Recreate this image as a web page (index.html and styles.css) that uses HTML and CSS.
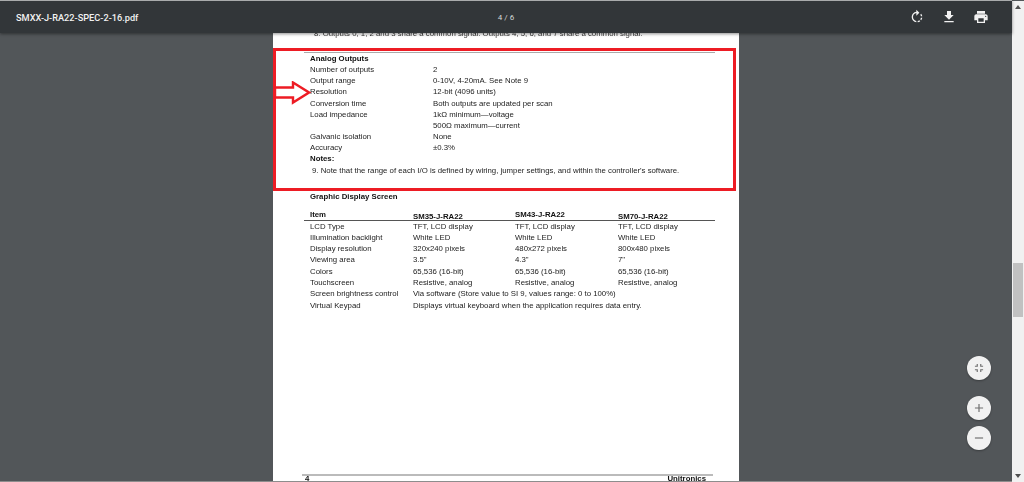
FILE: index.html
```html
<!DOCTYPE html>
<html lang="en">
<head>
  <meta charset="UTF-8" />
  <title>SMXX-J-RA22-SPEC-2-16.pdf</title>
  <link rel="stylesheet" href="styles.css">
</head>
<body>
  <header class="toolbar">
    <div class="file-name">SMXX-J-RA22-SPEC-2-16.pdf</div>
    <div class="page-count">4 / 6</div>
    <div class="tools">
      <svg class="tool" viewBox="0 0 24 24"><path d="M15.55 5.55L11 1v3.07C7.06 4.56 4 7.92 4 12s3.05 7.44 7 7.93v-2.02c-2.84-.48-5-2.94-5-5.91s2.16-5.43 5-5.91V10l4.55-4.45zM19.93 11c-.17-1.39-.72-2.73-1.62-3.89l-1.42 1.42c.54.75.88 1.6 1.02 2.47h2.02zM13 17.9v2.02c1.39-.17 2.74-.71 3.9-1.61l-1.44-1.44c-.75.54-1.59.89-2.46 1.03zm3.89-2.42l1.42 1.41c.9-1.16 1.45-2.5 1.62-3.89h-2.02c-.14.87-.48 1.72-1.02 2.48z"/></svg>
      <svg class="tool" viewBox="0 0 24 24"><path d="M19 9h-4V3H9v6H5l7 7 7-7zM5 18v2h14v-2H5z"/></svg>
      <svg class="tool" viewBox="0 0 24 24"><path d="M19 8H5c-1.66 0-3 1.34-3 3v6h4v4h12v-4h4v-6c0-1.66-1.34-3-3-3zm-3 11H8v-5h8v5zm3-7c-.55 0-1-.45-1-1s.45-1 1-1 1 .45 1 1-.45 1-1 1zm-1-9H6v4h12V3z"/></svg>
    </div>
  </header>

  <div class="content">
    <main class="viewer">
      <article class="page">
        <p class="note-top">8. Outputs 0, 1, 2 and 3 share a common signal. Outputs 4, 5, 6, and 7 share a common signal.</p>

        <section class="callout">
          <svg class="arrow" viewBox="0 0 36 24">
            <polygon points="0,6.5 18,6.5 18,1.5 34,11.5 18,21.5 18,16.5 0,16.5"/>
          </svg>
          <div class="spec">
            <div class="spec-title">Analog Outputs</div>
            <div class="spec-row"><span>Number of outputs</span><span>2</span></div>
            <div class="spec-row"><span>Output range</span><span>0-10V, 4-20mA. See Note 9</span></div>
            <div class="spec-row"><span>Resolution</span><span>12-bit (4096 units)</span></div>
            <div class="spec-row"><span>Conversion time</span><span>Both outputs are updated per scan</span></div>
            <div class="spec-row"><span>Load impedance</span><span>1kΩ minimum—voltage</span></div>
            <div class="spec-row"><span></span><span>500Ω maximum—current</span></div>
            <div class="spec-row"><span>Galvanic isolation</span><span>None</span></div>
            <div class="spec-row"><span>Accuracy</span><span>±0.3%</span></div>
            <div class="spec-title">Notes:</div>
            <div class="spec-note">9. Note that the range of each I/O is defined by wiring, jumper settings, and within the controller's software.</div>
          </div>
        </section>

        <h2 class="display-title">Graphic Display Screen</h2>

        <div class="display-table">
          <div class="head-row">
            <b class="head-item">Item</b>
            <b class="head-model">SM35-J-RA22</b>
            <b class="head-model head-mid">SM43-J-RA22</b>
            <b class="head-model">SM70-J-RA22</b>
          </div>
          <div class="row"><span>LCD Type</span><span>TFT, LCD display</span><span>TFT, LCD display</span><span>TFT, LCD display</span></div>
          <div class="row"><span>Illumination backlight</span><span>White LED</span><span>White LED</span><span>White LED</span></div>
          <div class="row"><span>Display resolution</span><span>320x240 pixels</span><span>480x272 pixels</span><span>800x480 pixels</span></div>
          <div class="row"><span>Viewing area</span><span>3.5"</span><span>4.3"</span><span>7"</span></div>
          <div class="row"><span>Colors</span><span>65,536 (16-bit)</span><span>65,536 (16-bit)</span><span>65,536 (16-bit)</span></div>
          <div class="row"><span>Touchscreen</span><span>Resistive, analog</span><span>Resistive, analog</span><span>Resistive, analog</span></div>
          <div class="row"><span>Screen brightness control</span><span class="span-all">Via software (Store value to SI 9, values range: 0 to 100%)</span></div>
          <div class="row row-last"><span>Virtual Keypad</span><span class="span-all">Displays virtual keyboard when the application requires data entry.</span></div>
        </div>

        <footer class="page-foot">
          <b>4</b>
          <b>Unitronics</b>
        </footer>
      </article>

      <div class="zoom-controls">
        <button class="fab fab-fit"><svg viewBox="0 0 24 24"><path d="M5 16h3v3h2v-5H5v2zm3-8H5v2h5V5H8v3zm6 11h2v-3h3v-2h-5v5zm2-11V5h-2v5h5V8h-3z"/></svg></button>
        <button class="fab"><svg viewBox="0 0 24 24"><path d="M19 13h-6v6h-2v-6H5v-2h6V5h2v6h6v2z"/></svg></button>
        <button class="fab"><svg viewBox="0 0 24 24"><path d="M19 13H5v-2h14v2z"/></svg></button>
      </div>
    </main>
  </div>

  <div class="scrollbar">
    <div class="scroll-up"></div>
    <div class="scroll-thumb"></div>
    <div class="scroll-down"></div>
  </div>
</body>
</html>
```

FILE: styles.css
```css
html, body {
  height: 100%;
}
body {
  margin: 0;
  height: 482px;
  overflow: hidden;
  position: relative;
  font-family: "Liberation Sans", Arial, sans-serif;
  background: #525659;
}
.toolbar {
  position: relative;
  z-index: 2;
  height: 32px;
  margin-right: 12px;
  border-top: 1px solid #a9abac;
  background: #323639;
  box-shadow: 0 1px 3px rgba(0,0,0,0.45);
  display: grid;
  grid-template-columns: 1fr auto 1fr;
  align-items: center;
  color: #f1f1f1;
}
.file-name {
  padding-left: 16px;
  font-family: Roboto, sans-serif;
  font-size: 9.2px;
  font-weight: 500;
}
.page-count {
  font-family: Roboto, sans-serif;
  font-size: 8px;
  color: #d5d6d7;
}
.tools {
  display: flex;
  justify-content: flex-end;
  gap: 16px;
  padding-right: 23px;
}
.tool {
  width: 16px;
  height: 16px;
  fill: #f1f1f1;
}
.content {
  height: 449px;
  margin-right: 12px;
  overflow: hidden;
}
.viewer {
  position: relative;
  height: 448px;
  border-bottom: 1px solid #8d8d8d;
  overflow: hidden;
}
.page {
  width: 466px;
  height: 470px;
  margin: 0 auto;
  background: #fff;
  color: #1c1c1c;
  font-size: 7.8px;
  line-height: 11.15px;
  filter: blur(0.3px);
}
.note-top {
  margin: 0;
  padding: 0 0 0 41px;
  position: relative;
  top: -5px;
  height: 15px;
  color: #333;
}
.callout {
  position: relative;
  width: 457px;
  height: 137px;
  border: 3px solid #ed1c24;
  background: #fff;
}
.arrow {
  position: absolute;
  left: -1px;
  top: 30px;
  width: 36px;
  height: 24px;
  fill: #fff;
  stroke: #ed1c24;
  stroke-width: 2.4;
}
.spec {
  margin: 1px 18px 0 28px;
  border-top: 1.5px solid #aaa;
}
.spec-title {
  padding-left: 6px;
  font-weight: bold;
  color: #111;
}
.spec-row {
  display: grid;
  grid-template-columns: 123px 1fr;
  padding-left: 6px;
}
.spec-note {
  padding-left: 8px;
  white-space: nowrap;
}
.display-title {
  margin: 0 0 0 37px;
  font-size: 7.8px;
  line-height: 12px;
  color: #111;
}
.display-table {
  margin: 6px 24px 0 31px;
}
.head-row {
  display: grid;
  grid-template-columns: 103px 102px 103px 1fr;
  height: 11px;
  border-bottom: 1px solid #555;
  padding-left: 6px;
  color: #111;
}
.head-model {
  position: relative;
  top: 2px;
}
.head-mid {
  top: 0;
}
.row {
  display: grid;
  grid-template-columns: 103px 102px 103px 1fr;
  padding-left: 6px;
}
.span-all {
  grid-column: 2 / 5;
}
.row-last {
  margin-top: 0.6px;
}
.page-foot {
  margin: 163px 26px 0 29px;
  padding: 0 7px 0 3px;
  border-top: 2px solid #bbb;
  display: flex;
  justify-content: space-between;
  line-height: 6px;
  color: #111;
}
.zoom-controls {
  position: absolute;
  right: 21px;
  top: 323px;
  display: flex;
  flex-direction: column;
}
.fab {
  width: 24px;
  height: 24px;
  margin: 0 0 6px;
  padding: 5px;
  border: none;
  border-radius: 50%;
  background: #f1f1f1;
  box-shadow: 0 1px 2px rgba(0,0,0,0.3);
}
.fab svg {
  display: block;
  width: 14px;
  height: 14px;
  fill: #6e6e6e;
}
.fab-fit {
  margin-bottom: 16px;
}
.scrollbar {
  position: absolute;
  top: 1px;
  right: 0;
  bottom: 0;
  width: 12px;
  background: #f1f1f1;
}
.scroll-up {
  width: 0;
  margin: 4px auto 0;
  border: 3px solid transparent;
  border-top: none;
  border-bottom: 4px solid #505050;
}
.scroll-thumb {
  width: 10px;
  height: 54px;
  margin: 254px 0 0 1px;
  background: #c1c1c1;
}
.scroll-down {
  position: absolute;
  left: 3px;
  bottom: 4px;
  width: 0;
  border: 3px solid transparent;
  border-bottom: none;
  border-top: 4px solid #505050;
}
```
